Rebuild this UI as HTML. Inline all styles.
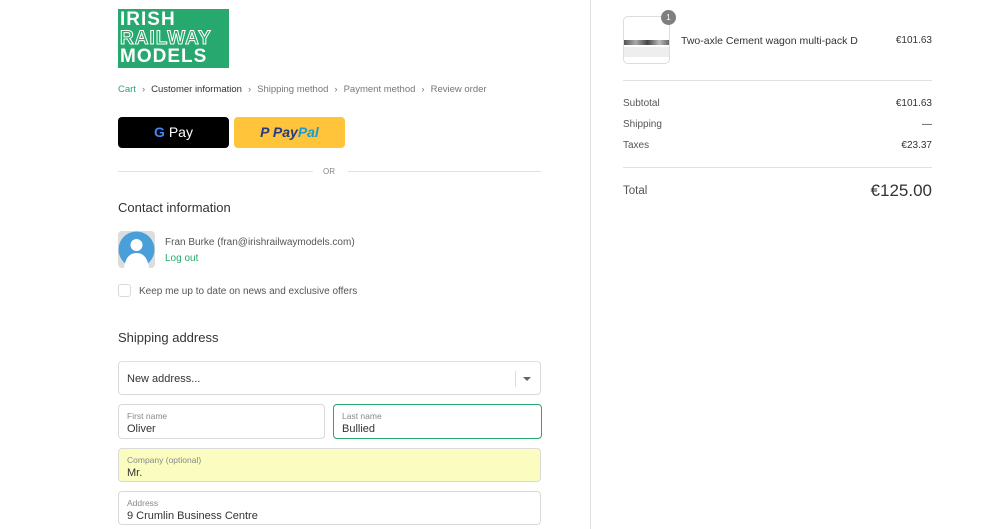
<!DOCTYPE html>
<html><head><meta charset="utf-8"><style>
*{box-sizing:border-box;margin:0;padding:0}
body{width:1000px;height:529px;overflow:hidden;background:#fff;font-family:"Liberation Sans",sans-serif;color:#333;position:relative}
.a{position:absolute}
.logo{left:118px;top:9px;width:111px;height:59px;background:#27a86e;color:#fff;font-weight:bold;font-size:19px;line-height:18.5px;padding:2px 0 0 2px;letter-spacing:1px}
.logo .o{color:transparent;-webkit-text-stroke:1px #fff}
.crumb{top:84px;left:118px;font-size:9.5px;color:#777;white-space:nowrap}
.crumb span{margin-right:6px}
.field{position:absolute;border:1px solid #d9d9d9;border-radius:4px;background:#fff}
.lab{position:absolute;left:8px;top:6px;font-size:8.5px;color:#888}
.val{position:absolute;left:8px;top:18px;font-size:11px;color:#333}
.row{font-size:10px;color:#555}
.r{right:68px;text-align:right}
</style></head><body>
<div class="a" style="left:590px;top:0;width:1px;height:529px;background:#e1e1e1"></div>
<div class="a logo"><div>IRISH</div><div class="o">RAILWAY</div><div>MODELS</div></div>
<div class="a crumb"><span style="color:#27a86e">Cart</span><span>›</span><span style="color:#333">Customer information</span><span>›</span><span>Shipping method</span><span>›</span><span>Payment method</span><span>›</span><span>Review order</span></div>
<div class="a" style="left:118px;top:117px;width:111px;height:31px;background:#000;border-radius:4px;color:#fff;font-size:14px;text-align:center;line-height:31px"><b style="color:#4285f4">G</b> Pay</div>
<div class="a" style="left:234px;top:117px;width:111px;height:31px;background:#ffc439;border-radius:4px;text-align:center;line-height:31px;font-size:14px;font-weight:bold;font-style:italic"><span style="color:#253b80">P </span><span style="color:#253b80">Pay</span><span style="color:#179bd7">Pal</span></div>
<div class="a" style="left:118px;top:171px;width:195px;height:1px;background:#e1e1e1"></div>
<div class="a" style="left:348px;top:171px;width:193px;height:1px;background:#e1e1e1"></div>
<div class="a" style="left:323px;top:167px;font-size:8px;color:#888">OR</div>
<div class="a" style="left:118px;top:200px;font-size:13px;color:#333">Contact information</div>
<div class="a" style="left:118px;top:231px;width:37px;height:37px;background:#ddd;border-radius:4px;overflow:hidden"><svg width="37" height="37"><circle cx="18.5" cy="18.5" r="18" fill="#4a9fd8"/><circle cx="18.5" cy="14" r="6" fill="#fff"/><path d="M6 37 Q8 22 18.5 22 Q29 22 31 37Z" fill="#fff"/></svg></div>
<div class="a row" style="left:165px;top:237px">Fran Burke (fran@irishrailwaymodels.com)</div>
<div class="a" style="left:165px;top:253px;font-size:10px;color:#27a86e">Log out</div>
<div class="a" style="left:118px;top:284px;width:13px;height:13px;border:1px solid #d9d9d9;border-radius:3px"></div>
<div class="a row" style="left:139px;top:286px">Keep me up to date on news and exclusive offers</div>
<div class="a" style="left:118px;top:330px;font-size:13px;color:#333">Shipping address</div>
<div class="field" style="left:118px;top:361px;width:423px;height:34px;border-top-color:#cfe9dc"><div class="val" style="top:11px">New address...</div><div class="a" style="left:396px;top:9px;width:1px;height:16px;background:#ddd"></div><div class="a" style="left:404px;top:15px;border:4px solid transparent;border-top:4px solid #666"></div></div>
<div class="field" style="left:118px;top:404px;width:207px;height:35px"><div class="lab">First name</div><div class="val">Oliver</div></div>
<div class="field" style="left:333px;top:404px;width:209px;height:35px;border:1.5px solid #27a86e"><div class="lab">Last name</div><div class="val">Bullied</div></div>
<div class="field" style="left:118px;top:448px;width:423px;height:34px;background:#fafdbf"><div class="lab">Company (optional)</div><div class="val">Mr.</div></div>
<div class="field" style="left:118px;top:491px;width:423px;height:34px"><div class="lab">Address</div><div class="val">9 Crumlin Business Centre</div></div>

<div class="a" style="left:623px;top:16px;width:47px;height:48px;border:1px solid #ddd;border-radius:5px;background:#fff;overflow:hidden"><div class="a" style="left:0;top:23px;width:47px;height:5px;background:linear-gradient(90deg,#555,#aaa,#444,#bbb,#555)"></div><div class="a" style="left:0;top:30px;width:47px;height:10px;background:#eee"></div></div>
<div class="a" style="left:661px;top:10px;width:15px;height:15px;border-radius:50%;background:#7f7f7f;color:#fff;font-size:8px;text-align:center;line-height:15px">1</div>
<div class="a" style="left:681px;top:35px;font-size:10.5px;color:#333">Two-axle Cement wagon multi-pack D</div>
<div class="a r" style="top:35px;font-size:10px;color:#333">€101.63</div>
<div class="a" style="left:623px;top:80px;width:309px;height:1px;background:#e1e1e1"></div>
<div class="a row" style="left:623px;top:98px">Subtotal</div><div class="a row r" style="top:98px;color:#333">€101.63</div>
<div class="a row" style="left:623px;top:119px">Shipping</div><div class="a row r" style="top:119px;color:#333">—</div>
<div class="a row" style="left:623px;top:140px">Taxes</div><div class="a row r" style="top:140px;color:#333">€23.37</div>
<div class="a" style="left:623px;top:167px;width:309px;height:1px;background:#e1e1e1"></div>
<div class="a" style="left:623px;top:185px;font-size:11.5px;color:#555">Total</div>
<div class="a r" style="top:181px;font-size:17px;color:#333">€125.00</div>
</body></html>
